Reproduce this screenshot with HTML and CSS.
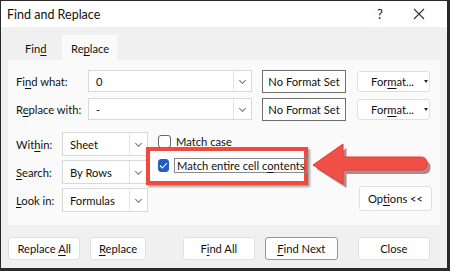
FILE: index.html
```html
<!DOCTYPE html>
<html lang="en">
<head>
  <meta charset="UTF-8" />
  <title>Find and Replace</title>
  <link rel="stylesheet" href="styles.css">
</head>
<body>
  <div class="window">
    <div class="titlebar">
      <span class="title">Find and Replace</span>
      <span class="help">?</span>
      <svg class="close" width="12" height="12" viewBox="0 0 12 12"><path d="M1 1 L11 11 M11 1 L1 11" stroke="#333" stroke-width="1.1" fill="none"/></svg>
    </div>

    <div class="main">
      <div class="tabs">
        <div class="tab"><span>Fin<u>d</u></span></div>
        <div class="tab active"><span>Re<u>p</u>lace</span></div>
      </div>

      <div class="panel">
        <div class="fields">
          <div class="label">Fi<u>n</u>d what:</div>
          <div class="combo"><span class="val">0</span><span class="chev"></span></div>
          <div class="noformat">No Format Set</div>
          <div class="btn format"><span>For<u>m</u>at...</span><span class="tri"></span></div>

          <div class="label">R<u>e</u>place with:</div>
          <div class="combo"><span class="val">-</span><span class="chev"></span></div>
          <div class="noformat">No Format Set</div>
          <div class="btn format"><span>For<u>m</u>at...</span><span class="tri"></span></div>
        </div>

        <div class="options">
          <div class="selects">
            <div class="label">Wit<u>h</u>in:</div>
            <div class="combo sel"><span class="val">Sheet</span><span class="chev"></span></div>
            <div class="label"><u>S</u>earch:</div>
            <div class="combo sel"><span class="val">By Rows</span><span class="chev"></span></div>
            <div class="label"><u>L</u>ook in:</div>
            <div class="combo sel"><span class="val">Formulas</span><span class="chev"></span></div>
          </div>

          <div class="checks">
            <div class="check"><span class="box"></span><span>Match <u>c</u>ase</span></div>
            <div class="highlight">
              <div class="check">
                <span class="box on"><svg width="9" height="7" viewBox="0 0 9 7"><path d="M1 3.5 L3.4 6 L8 1" stroke="#fff" stroke-width="1.1" fill="none"/></svg></span>
                <span class="focus">Match entire cell c<u>o</u>ntents</span>
              </div>
            </div>
          </div>

          <div class="btn opts"><span>Op<u>t</u>ions &lt;&lt;</span></div>
        </div>
      </div>

      <div class="actions">
        <div class="btn act"><span>Replace <u>A</u>ll</span></div>
        <div class="btn act narrow"><span><u>R</u>eplace</span></div>
        <div class="btn act spaced"><span>F<u>i</u>nd All</span></div>
        <div class="btn act default"><span><u>F</u>ind Next</span></div>
        <div class="btn act"><span>Close</span></div>
      </div>
    </div>

    <svg class="arrow" width="124" height="50" viewBox="0 0 124 50">
      <path d="M6 25 L36 4 L36 17 L114 17 Q120 17 120 23.5 Q120 30 114 30 L36 30 L36 44 Z" fill="#7a2a26" opacity="0.55" transform="translate(1.5,2)"/>
      <path d="M4 23 L34 2 L34 15 L112 15 Q118 15 118 21.5 Q118 28 112 28 L34 28 L34 42 Z" fill="#f05047" stroke="#e43a31" stroke-width="1"/>
    </svg>
  </div>
</body>
</html>
```

FILE: styles.css
```css
body {
  margin: 0;
  font-family: Lato, "Noto Sans", sans-serif;
  font-size: 11.2px;
  color: #111;
  background: #fff;
}
u {
  text-decoration-thickness: 1px;
  text-underline-offset: 2px;
}
.window {
  position: relative;
  width: 450px;
  height: 271px;
  box-sizing: border-box;
  border: 1px solid #2a2a2a;
  border-right-width: 3px;
  border-bottom-width: 3px;
  background: #f0f0f0;
  display: flex;
  flex-direction: column;
}
.titlebar {
  height: 26px;
  background: #fff;
  display: flex;
  align-items: center;
  padding: 0 0 0 6px;
}
.title {
  font-size: 12.5px;
  flex: 1;
}
.help {
  font-size: 13px;
  width: 36px;
}
.close {
  margin-right: 22px;
}
.main {
  flex: 1;
  padding: 8px 7px 0 7px;
}
.tabs {
  display: flex;
  height: 25px;
}
.tab {
  width: 54px;
  padding-left: 17px;
  box-sizing: border-box;
  line-height: 28px;
}
.tab.active {
  background: #fafafa;
  width: 55px;
  padding-left: 9px;
}
.panel {
  background: #fafafa;
  height: 165px;
  box-sizing: border-box;
  padding: 10px 8px 0 8px;
}
.fields {
  display: grid;
  grid-template-columns: 62px 164px 84px 74px;
  grid-auto-rows: 22px;
  column-gap: 10px;
  row-gap: 6px;
  align-items: center;
}
.fields .format {
  margin-left: 1px;
}
.label {
  white-space: nowrap;
}
.combo {
  height: 22px;
  box-sizing: border-box;
  border: 1px solid #d9d9d9;
  background: #fff;
  display: flex;
  align-items: center;
  min-width: 0;
}
.combo .val {
  flex: 1;
  padding-left: 7px;
}
.chev {
  width: 17px;
  height: 100%;
  border-left: 1px solid #e3e3e3;
  position: relative;
}
.chev::after {
  content: "";
  position: absolute;
  left: 6px;
  top: 7px;
  width: 4px;
  height: 4px;
  border-right: 1px solid #777;
  border-bottom: 1px solid #777;
  transform: rotate(45deg);
}
.sel .chev::after {
  top: 8px;
}
.noformat {
  height: 23px;
  box-sizing: border-box;
  border: 1px solid #6e6e6e;
  background: #fff;
  display: flex;
  align-items: center;
  justify-content: center;
  white-space: nowrap;
  min-width: 0;
}
.btn {
  box-sizing: border-box;
  border: 1px solid #e0e0e0;
  border-radius: 3px;
  background: #fff;
  display: flex;
  align-items: center;
  justify-content: center;
  white-space: nowrap;
}
.format {
  height: 21px;
  padding-left: 12px;
}
.tri {
  display: inline-block;
  margin-left: 10px;
  border-left: 2px solid transparent;
  border-right: 2px solid transparent;
  border-top: 3px solid #222;
}
.options {
  display: flex;
  margin-top: 12px;
}
.selects {
  display: grid;
  grid-template-columns: 46px 86px;
  grid-auto-rows: 24px;
  row-gap: 4px;
  align-items: center;
}
.combo.sel {
  height: 24px;
}
.checks {
  margin-left: 10px;
  padding-top: 3px;
  flex: 1;
}
.check {
  display: flex;
  align-items: center;
  height: 13px;
  white-space: nowrap;
}
.box {
  width: 13px;
  height: 13px;
  box-sizing: border-box;
  border: 1px solid #666;
  border-radius: 3px;
  background: #fff;
  margin-right: 5px;
  display: flex;
  align-items: center;
  justify-content: center;
}
.box.on {
  background: #1f5fbf;
  border-color: #1f5fbf;
}
.highlight {
  position: absolute;
  left: 145px;
  top: 146px;
  width: 162px;
  height: 38px;
  box-sizing: border-box;
  border: 4px solid #f04a3f;
  background: #fff;
  padding: 8px 0 0 8px;
  box-shadow: 2px 2px 2px rgba(0, 0, 0, 0.35);
}
.focus {
  border: 1px solid #8a8a8a;
  padding: 0 2px;
  line-height: 13px;
}
.opts {
  width: 73px;
  height: 25px;
  align-self: flex-end;
  margin-bottom: 1px;
}
.actions {
  display: flex;
  margin-top: 12px;
}
.act {
  width: 75px;
  height: 23px;
  margin-right: 10px;
}
.narrow {
  width: 57px;
}
.spaced {
  margin-left: 27px;
}
.default {
  border: 1px solid #6aa0d8;
  margin-right: 20px;
}
.arrow {
  position: absolute;
  left: 308px;
  top: 141px;
}
```
